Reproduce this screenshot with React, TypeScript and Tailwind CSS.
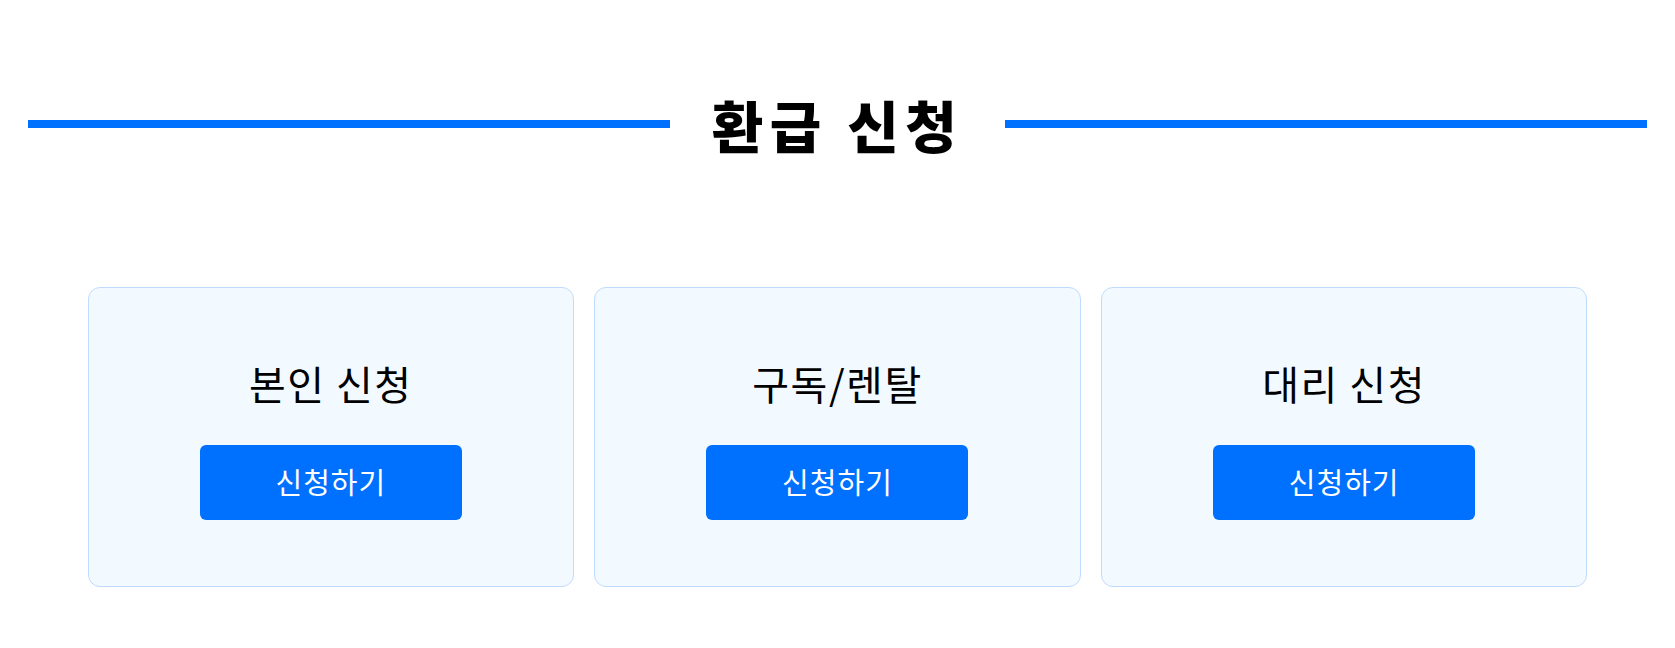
const FONT = { fontFamily: '"Noto Sans CJK KR", "Noto Sans", sans-serif' };

const options = [
  { id: "self", title: "본인 신청" },
  { id: "rental", title: "구독/렌탈" },
  { id: "proxy", title: "대리 신청" },
];

export default function App() {
  return (
    <main className="min-h-screen bg-white pt-[82px]" style={FONT}>
      {/* --- Section heading with side rules --- */}
      <div className="flex items-center gap-[42px] px-[28px]">
        <div className="h-2 flex-1 bg-[#0070ff]" />
        <h2 className="text-[56px] leading-[84px] font-black tracking-[6.5px] text-black">
          환급 신청
        </h2>
        <div className="h-2 flex-1 bg-[#0070ff]" />
      </div>

      {/* --- Option cards --- */}
      <div className="mx-auto mt-[121px] grid max-w-[1500px] grid-cols-3 gap-5">
        {options.map((o) => (
          <OptionCard key={o.id} title={o.title} />
        ))}
      </div>
    </main>
  );
}

function OptionCard({ title }: { title: string }) {
  return (
    <div className="flex h-[300px] flex-col items-center justify-center rounded-xl border border-[#bfdbfe] bg-[#f3faff]">
      <h3 className="mb-[34px] text-[40px] leading-[56px] font-normal tracking-[1.5px] text-black">
        {title}
      </h3>
      <button className="h-[75px] w-[262px] rounded-md bg-[#0070ff] text-[29px] tracking-[1px] text-white">
        신청하기
      </button>
    </div>
  );
}
